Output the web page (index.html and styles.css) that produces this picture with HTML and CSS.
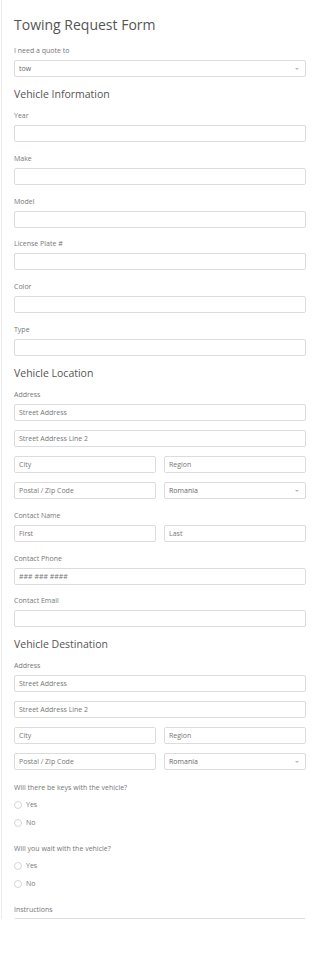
FILE: index.html
```html
<!DOCTYPE html>
<html lang="en">
<head>
<meta charset="UTF-8">
<meta name="viewport" content="width=device-width, initial-scale=1.0">
<title>Towing Request Form</title>
<link rel="stylesheet" href="styles.css">
</head>
<body>

<div class="form">
  <h1>Towing Request Form</h1>

  <div class="field">
    <label class="label">I need a quote to</label>
    <div class="select-wrap">
      <select class="input"><option>tow</option></select>
    </div>
  </div>

  <!-- Vehicle -->
  <h2>Vehicle Information</h2>
  <div class="field"><label class="label">Year</label><input class="input" type="text"></div>
  <div class="field"><label class="label">Make</label><input class="input" type="text"></div>
  <div class="field"><label class="label">Model</label><input class="input" type="text"></div>
  <div class="field"><label class="label">License Plate #</label><input class="input" type="text"></div>
  <div class="field"><label class="label">Color</label><input class="input" type="text"></div>
  <div class="field"><label class="label">Type</label><input class="input" type="text"></div>

  <!-- Location -->
  <h2>Vehicle Location</h2>
  <div class="field">
    <label class="label">Address</label>
    <div class="stack">
      <input class="input" type="text" placeholder="Street Address">
      <input class="input" type="text" placeholder="Street Address Line 2">
      <div class="row">
        <input class="input" type="text" placeholder="City">
        <input class="input" type="text" placeholder="Region">
      </div>
      <div class="row">
        <input class="input" type="text" placeholder="Postal / Zip Code">
        <div class="select-wrap">
          <select class="input"><option>Romania</option></select>
        </div>
      </div>
    </div>
  </div>
  <div class="field">
    <label class="label">Contact Name</label>
    <div class="row">
      <input class="input" type="text" placeholder="First">
      <input class="input" type="text" placeholder="Last">
    </div>
  </div>
  <div class="field"><label class="label">Contact Phone</label><input class="input" type="tel" placeholder="### ### ####"></div>
  <div class="field"><label class="label">Contact Email</label><input class="input" type="email"></div>

  <!-- Destination -->
  <h2>Vehicle Destination</h2>
  <div class="field">
    <label class="label">Address</label>
    <div class="stack">
      <input class="input" type="text" placeholder="Street Address">
      <input class="input" type="text" placeholder="Street Address Line 2">
      <div class="row">
        <input class="input" type="text" placeholder="City">
        <input class="input" type="text" placeholder="Region">
      </div>
      <div class="row">
        <input class="input" type="text" placeholder="Postal / Zip Code">
        <div class="select-wrap">
          <select class="input"><option>Romania</option></select>
        </div>
      </div>
    </div>
  </div>

  <div class="field field-radio">
    <label class="label">Will there be keys with the vehicle?</label>
    <label class="radio"><input type="radio" name="keys"> Yes</label>
    <label class="radio"><input type="radio" name="keys"> No</label>
  </div>
  <div class="field field-radio">
    <label class="label">Will you wait with the vehicle?</label>
    <label class="radio"><input type="radio" name="wait"> Yes</label>
    <label class="radio"><input type="radio" name="wait"> No</label>
  </div>

  <div class="field field-last">
    <label class="label">Instructions</label>
    <textarea class="input textarea"></textarea>
  </div>
</div>

</body>
</html>
```

FILE: styles.css
```css
body, html {
  margin: 0;
  background: #fff;
  font-family: "Open Sans", Arial, sans-serif;
  color: #555;
}
.form {
  margin-left: 1px;
  border-left: 1px solid #ececec;
  height: 919px; /* form frame is cut at the bottom */
  overflow: hidden;
  padding: 0 14px 0 12px;
  box-sizing: border-box;
}
h1 {
  font-size: 14px;
  font-weight: 400;
  line-height: 20px;
  margin: 15px 0 11px;
  color: #555;
}
h2 {
  font-size: 10.5px;
  font-weight: 400;
  line-height: 14px;
  margin: 10px 0 10px;
  color: #555;
}
.field {
  display: flex;
  flex-direction: column;
}
.field + .field {
  margin-top: 11.8px;
}
.label {
  font-size: 7px;
  line-height: 10px;
  color: #777;
  margin-bottom: 4px;
}
.input {
  display: block;
  width: 100%;
  height: 17px;
  box-sizing: border-box;
  border: 1px solid #dcdcdc;
  border-radius: 2px;
  background: #fff;
  padding: 0 4px;
  margin: 0;
  font-family: "Open Sans", Arial, sans-serif;
  font-size: 7px;
  color: #666;
  outline: none;
}
.input::placeholder {
  color: #777;
}
select.input {
  appearance: none;
  -webkit-appearance: none;
}
.select-wrap {
  position: relative;
}
.select-wrap::after {
  /* small dropdown caret */
  content: "";
  position: absolute;
  right: 7px;
  top: 8px;
  border-left: 2px solid transparent;
  border-right: 2px solid transparent;
  border-top: 2px solid #bbb;
}
.stack {
  display: flex;
  flex-direction: column;
  gap: 9px;
}
.row {
  display: grid;
  grid-template-columns: minmax(0, 1fr) minmax(0, 1fr);
  gap: 8px;
}
.field + .field-radio {
  margin-top: 12.6px;
}
.field-radio + .field-radio,
.field-radio + .field-last {
  margin-top: 12px;
}
.field-radio .label {
  margin-bottom: 3px;
}
.radio {
  display: flex;
  align-items: center;
  height: 18px;
  font-size: 7px;
  color: #777;
}
.radio input {
  appearance: none;
  -webkit-appearance: none;
  width: 8px;
  height: 8px;
  margin: 0 4px 0 0;
  border: 1px solid #d6d6d6;
  border-radius: 50%;
  background: #fff;
}
.field-last .label {
  margin-bottom: 3px;
}
.textarea {
  height: 60px;
  resize: none;
}
```
